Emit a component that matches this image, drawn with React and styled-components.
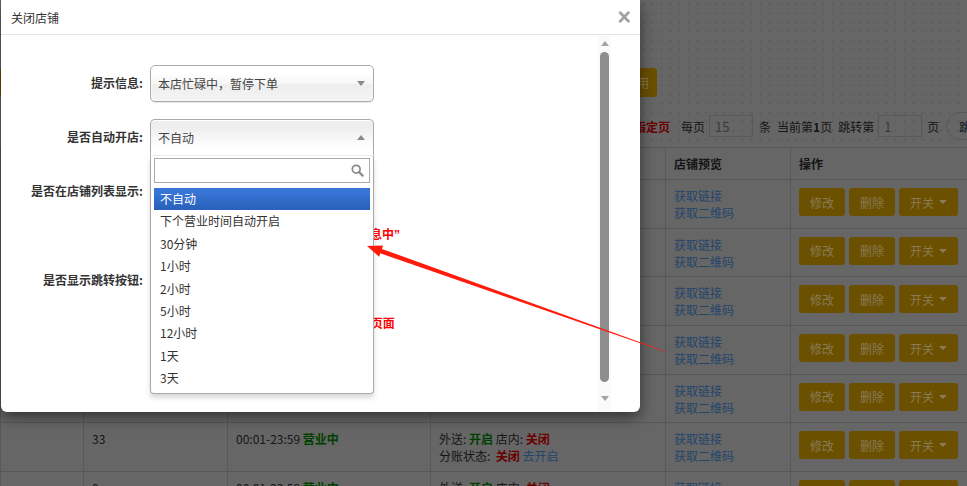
import React from "react";
import styled, { createGlobalStyle, css } from "styled-components";

// colours of the page as seen through the modal backdrop
const dim = {
  page: "#666666",
  dot: "#595959",
  line: "#585858",
  text: "#151515",
  muted: "#3a3a3a",
  gold: "#6b5000",
  goldText: "#8a7a55",
  link: "#24456a",
  green: "#004000",
  red: "#6a0000",
};

const GlobalStyle = createGlobalStyle`
  html, body { margin: 0; padding: 0; }
  body {
    font-family: "Microsoft YaHei", "Noto Sans CJK SC", sans-serif;
    font-size: 12px;
    color: #333;
    background: ${dim.page};
  }
`;

const shops = [
  { id: "36" },
  { id: "35" },
  { id: "34" },
  { id: "18" },
  { id: "12" },
  { id: "33", split: true },
  { id: "0", split: true },
];

const options = [
  "不自动",
  "下个营业时间自动开启",
  "30分钟",
  "1小时",
  "2小时",
  "5小时",
  "12小时",
  "1天",
  "3天",
];

const App = () => (
  <>
    <GlobalStyle />
    <Page>
      <TopArea>
        <Toolbar>
          <GoldButton $tall>添加店铺</GoldButton>
          <GoldButton $tall>启用</GoldButton>
        </Toolbar>
        <Pager>
          <PagerLead>首页 上一页 下一页 尾页 指定页</PagerLead>
          <PagerText $gap={11}>每页</PagerText>
          <PagerInput>15</PagerInput>
          <PagerText $gap={6}>条</PagerText>
          <PagerText $gap={6}>当前第<b>1</b>页</PagerText>
          <PagerText $gap={6}>跳转第</PagerText>
          <PagerInput>1</PagerInput>
          <PagerText $gap={5}>页</PagerText>
          <JumpButton>跳转</JumpButton>
        </Pager>
      </TopArea>

      <Table>
        <colgroup>
          <col style={{ width: 83 }} />
          <col style={{ width: 144 }} />
          <col style={{ width: 203 }} />
          <col style={{ width: 235 }} />
          <col style={{ width: 125 }} />
          <col style={{ width: 177 }} />
        </colgroup>
        <thead>
          <tr>
            <Th></Th>
            <Th>排序</Th>
            <Th>营业时间</Th>
            <Th>状态</Th>
            <Th>店铺预览</Th>
            <Th>操作</Th>
          </tr>
        </thead>
        <tbody>
          {shops.map((shop, i) => (
            <tr key={i}>
              <Td></Td>
              <Td>{shop.id}</Td>
              <Td>00:01-23:59 <Green>营业中</Green></Td>
              <Td>
                <div>外送: <Green>开启</Green> 店内: <Red>关闭</Red></div>
                {shop.split && (
                  <div>分账状态: &nbsp;<Red>关闭</Red> <TableLink>去开启</TableLink></div>
                )}
              </Td>
              <Td>
                <TableLink $block>获取链接</TableLink>
                <TableLink $block>获取二维码</TableLink>
              </Td>
              <Td>
                <Actions>
                  <GoldButton>修改</GoldButton>
                  <GoldButton>删除</GoldButton>
                  <GoldButton>开关<Caret /></GoldButton>
                </Actions>
              </Td>
            </tr>
          ))}
        </tbody>
      </Table>

      <Modal>
        <ModalHeader>
          <ModalTitle>关闭店铺</ModalTitle>
          <CloseButton>×</CloseButton>
        </ModalHeader>
        <ModalBody>
          <FormArea>
            <FormRow $gap={17}>
              <Label $pad={9}>提示信息:</Label>
              <Select>
                <span>本店忙碌中，暂停下单</span>
                <Triangle />
              </Select>
            </FormRow>

            <FormRow $gap={26}>
              <Label $pad={9}>是否自动开店:</Label>
              <SelectWrap>
                <Select $open>
                  <span>不自动</span>
                  <Triangle $up />
                </Select>
                <Drop>
                  <SearchBox>
                    <svg width="13" height="13" viewBox="0 0 13 13">
                      <circle cx="5.2" cy="5.2" r="3.9" fill="none" stroke="#8a8a8a" strokeWidth="1.7" />
                      <line x1="8" y1="8" x2="11.6" y2="11.6" stroke="#8a8a8a" strokeWidth="2.3" strokeLinecap="round" />
                    </svg>
                  </SearchBox>
                  <Results>
                    {options.map((o, i) => (
                      <Option key={o} $active={i === 0}>{o}</Option>
                    ))}
                  </Results>
                </Drop>
              </SelectWrap>
            </FormRow>

            <FormRow $gap={27}>
              <Label>是否在店铺列表显示:</Label>
              <div>
                <Radios>
                  <label><input type="radio" name="list" defaultChecked /> 是</label>
                  <label><input type="radio" name="list" /> 否</label>
                </Radios>
                <Hint>选择是后在店铺列表页中显示状态为“休息中”</Hint>
              </div>
            </FormRow>

            <FormRow>
              <Label>是否显示跳转按钮:</Label>
              <div>
                <Radios>
                  <label><input type="radio" name="jump" defaultChecked /> 是</label>
                  <label><input type="radio" name="jump" /> 否</label>
                </Radios>
                <Hint>选是后显示按钮, 点击可跳转至指定外部页面</Hint>
              </div>
            </FormRow>
          </FormArea>

          <ScrollTrack>
            <Triangle $up $grey />
            <Thumb />
            <Triangle $grey $down />
          </ScrollTrack>
        </ModalBody>
      </Modal>

      {/* red annotation arrow drawn over the screenshot */}
      <Annotation viewBox="360 240 310 115" width="310" height="115">
        <polygon
          fill="#ff1a0a"
          points="367,246 383.1,245.5 381.9,248.9 665.1,351.2 664.9,351.8 380.3,253.3 379.1,256.7"
        />
      </Annotation>
    </Page>
  </>
);

// page behind the dialog
const Page = styled.div`
  position: relative;
  width: 967px;
  height: 486px;
  overflow: hidden;
  background: ${dim.page};
  color: ${dim.text};
`;

const TopArea = styled.div`
  height: 147px;
  box-sizing: border-box;
  padding-top: 68px;
  background-image: radial-gradient(${dim.dot} 0.8px, transparent 1.2px);
  background-size: 9px 9px;
`;

const Toolbar = styled.div`
  width: 657px;
  display: flex;
  justify-content: space-between;
`;

const GoldButton = styled.button`
  height: ${(p) => (p.$tall ? 29 : 28)}px;
  padding: 0 ${(p) => (p.$tall ? 8 : 11)}px;
  border: none;
  border-radius: 3px;
  background: ${dim.gold};
  color: ${dim.goldText};
  font: inherit;
  display: inline-flex;
  align-items: center;
`;

const Caret = styled.span`
  margin-left: 5px;
  border-left: 4px solid transparent;
  border-right: 4px solid transparent;
  border-top: 4px solid ${dim.goldText};
`;

const Pager = styled.div`
  margin-top: 18px;
  height: 22px;
  display: flex;
  align-items: center;
  white-space: nowrap;

  & > * {
    flex: none;
  }
`;

const PagerLead = styled.span`
  width: 670px;
  text-align: right;
  color: ${dim.red};
  font-weight: bold;
`;

const PagerText = styled.span`
  margin-left: ${(p) => p.$gap}px;
`;

const PagerInput = styled.span`
  margin-left: 4px;
  width: 44px;
  height: 22px;
  box-sizing: border-box;
  border: 1px solid ${dim.line};
  padding-left: 5px;
  display: flex;
  align-items: center;
  color: ${dim.muted};
  font-size: 13px;
`;

const JumpButton = styled.span`
  margin-left: 7px;
  height: 26px;
  padding: 0 12px;
  border: 1px solid ${dim.line};
  border-radius: 14px;
  display: flex;
  align-items: center;
`;

const Table = styled.table`
  width: 967px;
  table-layout: fixed;
  border-collapse: collapse;
`;

const Th = styled.th`
  border: 1px solid ${dim.line};
  padding: 7px 8px;
  line-height: 17px;
  text-align: left;
  font-weight: bold;
  white-space: nowrap;
`;

const Td = styled.td`
  border: 1px solid ${dim.line};
  padding: 7px 8px 6.7px;
  line-height: 17px;
  vertical-align: top;
  white-space: nowrap;
`;

const Green = styled.b`
  color: ${dim.green};
`;

const Red = styled.b`
  color: ${dim.red};
`;

const TableLink = styled.a`
  color: ${dim.link};
  ${(p) => p.$block && css`display: block;`}
`;

const Actions = styled.div`
  display: flex;
  gap: 4px;
  margin-top: 1px;
`;

// dialog
const Modal = styled.div`
  position: absolute;
  left: 1px;
  top: 0;
  width: 639px;
  height: 412px;
  background: #fff;
  color: #333;
  border-radius: 0 0 6px 6px;
  box-shadow: 0 5px 15px rgba(0, 0, 0, 0.5);
  z-index: 10;
  display: flex;
  flex-direction: column;
`;

const ModalHeader = styled.div`
  height: 34px;
  flex: none;
  border-bottom: 1px solid #e5e5e5;
  padding: 0 9px 0 10px;
  display: flex;
  align-items: center;
  justify-content: space-between;
`;

const ModalTitle = styled.span`
  color: #333;
  font-size: 12px;
`;

const CloseButton = styled.span`
  font-family: "Liberation Sans", Arial, sans-serif;
  font-size: 23px;
  font-weight: bold;
  line-height: 1;
  color: #a0a0a0;
`;

const ModalBody = styled.div`
  flex: 1;
  display: flex;
  padding-right: 29px;
  min-height: 0;
`;

const FormArea = styled.div`
  flex: 1;
  padding-top: 30px;
`;

const FormRow = styled.div`
  display: grid;
  grid-template-columns: 142px 224px;
  column-gap: 7px;
  align-items: start;
  margin-bottom: ${(p) => p.$gap || 0}px;
`;

const Label = styled.div`
  text-align: right;
  font-weight: bold;
  line-height: 18px;
  padding-top: ${(p) => p.$pad || 0}px;
  color: #333;
  white-space: nowrap;
`;

const SelectWrap = styled.div`
  position: relative;
`;

const Select = styled.div`
  height: 37px;
  box-sizing: border-box;
  border: 1px solid #aaa;
  border-radius: 5px;
  padding: 0 8px 0 7px;
  display: flex;
  align-items: center;
  justify-content: space-between;
  color: #444;
  background: linear-gradient(#fff 20%, #f6f6f6 50%, #eee 52%, #f4f4f4 100%);
  box-shadow: 0 0 3px #fff inset, 0 1px 1px rgba(0, 0, 0, 0.1);
  ${(p) =>
    p.$open &&
    css`
      border-radius: 5px 5px 0 0;
      border-bottom-color: transparent;
      background: linear-gradient(#eee 20%, #fff 80%);
      box-shadow: 0 1px 0 #fff inset;
    `}
`;

const Triangle = styled.span`
  width: 0;
  height: 0;
  border-left: 4px solid transparent;
  border-right: 4px solid transparent;
  ${(p) =>
    p.$up
      ? css`border-bottom: 5px solid ${p.$grey ? "#a3a3a3" : "#8a8a8a"};`
      : css`border-top: 5px solid ${p.$grey ? "#a3a3a3" : "#8a8a8a"};`}
  ${(p) => p.$grey && css`margin-top: ${p.$down ? 14 : 6}px;`}
`;

const Drop = styled.div`
  position: absolute;
  top: 100%;
  left: 0;
  width: 224px;
  box-sizing: border-box;
  border: 1px solid #aaa;
  border-top: 0;
  border-radius: 0 0 4px 4px;
  background: #fff;
  box-shadow: 0 4px 5px rgba(0, 0, 0, 0.15);
  padding: 2px 3px 3px;
  z-index: 3;
`;

const SearchBox = styled.div`
  height: 25px;
  box-sizing: border-box;
  border: 1px solid #aaa;
  display: flex;
  align-items: center;
  justify-content: flex-end;
  padding-right: 5px;
`;

const Results = styled.ul`
  list-style: none;
  margin: 5px 0 0;
  padding: 0;
`;

const Option = styled.li`
  height: 22.4px;
  line-height: 22.4px;
  padding: 0 6px;
  color: #333;
  ${(p) =>
    p.$active &&
    css`
      color: #fff;
      background: linear-gradient(#3875d7 20%, #2a62bc 90%);
    `}
`;

const Radios = styled.div`
  height: 18px;
  padding-left: 8px;
  display: flex;
  align-items: center;
  gap: 14px;

  input {
    margin: 0 2px 0 0;
    vertical-align: -2px;
  }
`;

const Hint = styled.div`
  margin-top: 26px;
  padding-left: 10px;
  line-height: 18px;
  font-family: "Liberation Sans", "Noto Sans CJK SC", sans-serif;
  color: #f00;
  font-weight: bold;
  white-space: nowrap;
`;

const ScrollTrack = styled.div`
  width: 13px;
  background: #fafafa;
  display: flex;
  flex-direction: column;
  align-items: center;
`;

const Thumb = styled.div`
  width: 9px;
  height: 330px;
  margin-top: 6px;
  border-radius: 4.5px;
  background: #8d8d8d;
`;

const Annotation = styled.svg`
  position: absolute;
  left: 360px;
  top: 240px;
  z-index: 20;
  pointer-events: none;
`;

export default App;
